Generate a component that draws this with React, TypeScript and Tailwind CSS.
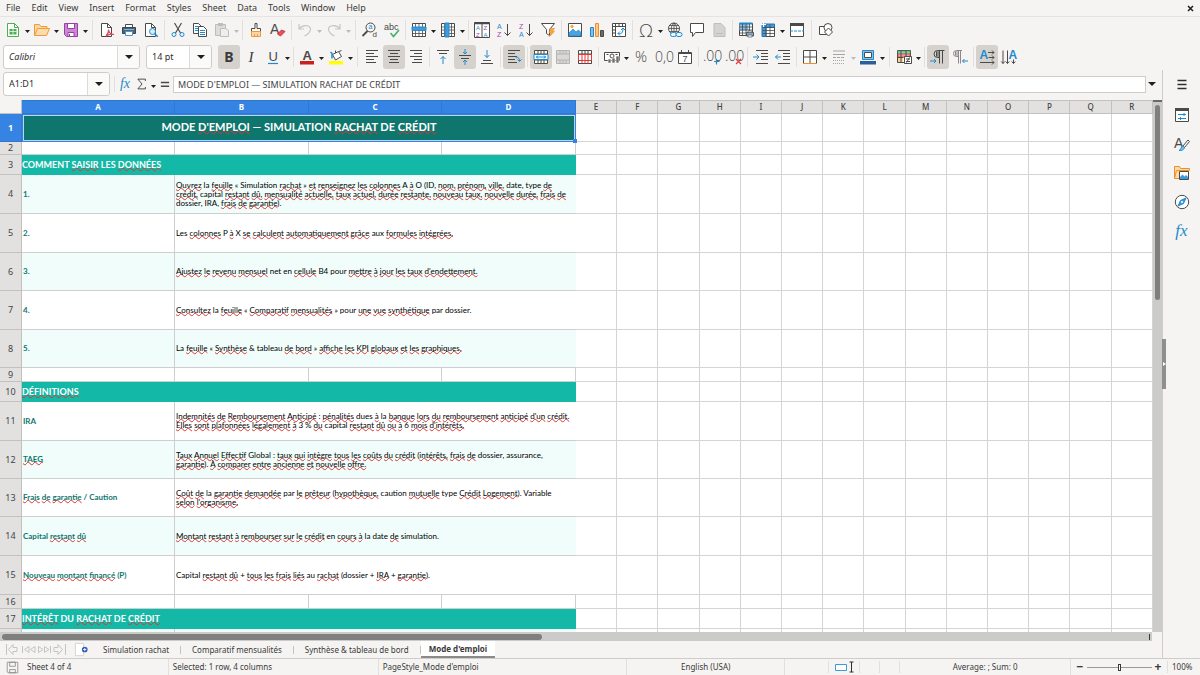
import { useState } from 'react'
import type { ReactNode } from 'react'
import clsx from 'clsx'

const INK = '#4a4a48'
const BLUE = '#1e8bcd'
const SKY = '#83beec'

function Ico({ children, size = 16 }: { children: ReactNode; size?: number }) {
  return (
    <svg
      width={size}
      height={size}
      viewBox="0 0 16 16"
      fill="none"
      stroke={INK}
      strokeWidth="1"
      fontFamily="Liberation Sans, sans-serif"
      aria-hidden="true"
      className="shrink-0 overflow-visible"
    >
      {children}
    </svg>
  )
}

interface GlyphProps {
  x: number
  y: number
  size: number
  color?: string
  weight?: number
  family?: string
  children: string
}

function Glyph({ x, y, size, color = INK, weight, family, children }: GlyphProps) {
  return (
    <text x={x} y={y} fontSize={size} fill={color} stroke="none" fontWeight={weight} fontFamily={family}>
      {children}
    </text>
  )
}

function Lines({ rows, color = INK }: { rows: [number, number, number][]; color?: string }) {
  return <path stroke={color} d={rows.map(([x1, x2, y]) => `M${x1} ${y}H${x2}`).join('')} />
}

const ICONS: Record<string, ReactNode> = {
  new: (
    <Ico>
      <path d="M2.5 1.5h7l4 4v9h-11z" fill="#fff" stroke="#4caf50" />
      <path d="M9.5 1.5v4h4" stroke="#4caf50" />
      <path d="M4.5 7h7v5.500h-7z" fill="#4caf50" stroke="none" />
      <path d="M4.500 9.500h7M8 7v5.500" stroke="#fff" strokeWidth=".7" />
    </Ico>
  ),
  open: (
    <Ico>
      <path d="M.5 13.500V2.500h5l1.500 2h6v3" fill="#fbd9a5" stroke="#ef9b3b" />
      <path d="M.5 13.500l3-7h12l-3 7z" fill="#fcdcae" stroke="#ef9b3b" />
    </Ico>
  ),
  save: (
    <Ico>
      <path d="M1.500 1.500h13v13h-11l-2-2z" fill="#c98bd0" stroke="#9a3fa6" />
      <path d="M4.500 1.500h7v5h-7zM5 10.500h6v4H5z" fill="#fff" stroke="#9a3fa6" />
      <path d="M6.500 12v2.500" stroke="#9a3fa6" />
    </Ico>
  ),
  pdf: (
    <Ico>
      <path d="M2.500 1.500h6l4 4v9h-10z" fill="#fff" />
      <path d="M8.500 1.500v4h4" />
      <path d="M7 14c2-2 3-4 2.500-6.500.5 3 2.500 5 5.500 5-3-1-5.500 0-8 1.500z" stroke="#dc4b5c" strokeWidth="1.200" />
    </Ico>
  ),
  print: (
    <Ico>
      <path d="M4.500 2.500h7v3h-7z" fill="#fff" />
      <path d="M1.500 5.500h13v6h-13z" fill="#56606a" stroke="#3d464f" />
      <path d="M4.500 9.500h7v4h-7z" fill="#fff" stroke="#3f9bd6" />
      <path d="M3 7.500h10" stroke="#75b9e6" />
    </Ico>
  ),
  preview: (
    <Ico>
      <path d="M2.500 1.500h6l4 4v9h-10z" fill="#fff" />
      <path d="M8.500 1.500v4h4" />
      <circle cx="9.500" cy="9.500" r="3" fill="#d6ecfa" stroke={BLUE} />
      <path d="M11.700 11.700l3 3" stroke={BLUE} strokeWidth="1.500" />
    </Ico>
  ),
  cut: (
    <Ico>
      <path d="M4.500 1l6 10M11.500 1l-6 10" strokeWidth="1.200" />
      <circle cx="4" cy="12.500" r="2" stroke={BLUE} />
      <circle cx="12" cy="12.500" r="2" stroke={BLUE} />
    </Ico>
  ),
  copy: (
    <Ico>
      <path d="M1.500 1.500h5l3 3v7h-8z" fill="#fff" />
      <path d="M6.500 4.500h5l3 3v7h-8z" fill="#fff" />
      <Lines rows={[[3, 6, 4.500], [3, 6, 6.500], [3, 6, 8.500], [8, 13, 8.500], [8, 13, 10.500], [8, 13, 12.500]]} color={BLUE} />
    </Ico>
  ),
  paste: (
    <Ico>
      <path d="M1.500 2.500h10v11h-10z" fill="#dcdcda" stroke="#bdbdbb" />
      <path d="M4 1h5v3H4z" fill="#bdbdbb" stroke="none" />
      <path d="M6.500 6.500h5l3 2v6h-8z" fill="#eee" stroke="#bdbdbb" />
    </Ico>
  ),
  clone: (
    <Ico>
      <path d="M7 1.500h2v5h3.500v3h-9v-3H7z" fill="#fff" />
      <path d="M3.500 9.500v5h9v-5z" fill="#fbd9a5" stroke="#ef9b3b" />
      <path d="M6.500 12v2.500M9.500 12v2.500" stroke="#ef9b3b" />
    </Ico>
  ),
  clear: (
    <Ico>
      <Glyph x={0} y={12} size={14}>A</Glyph>
      <path d="M7.500 12l4-4 3.500 1.500-4.500 4.500z" fill="#e8525c" stroke="#c9343f" />
    </Ico>
  ),
  undo: (
    <Ico>
      <path d="M2 2v5h5M2.500 6.500C6 2 13 3 13.500 7c0 3-3 5.500-6 7" stroke="#c6c5c3" strokeWidth="1.200" />
    </Ico>
  ),
  redo: (
    <Ico>
      <path d="M14 2v5H9M13.500 6.500C10 2 3 3 2.500 7c0 3 3 5.500 6 7" stroke="#c6c5c3" strokeWidth="1.200" />
    </Ico>
  ),
  find: (
    <Ico>
      <circle cx="8.500" cy="5.500" r="4.500" />
      <path d="M5.500 9L.5 14" strokeWidth="1.800" />
      <Glyph x={6.500} y={7} size={7} color={BLUE}>a</Glyph>
      <Glyph x={10.500} y={15} size={8}>d</Glyph>
    </Ico>
  ),
  spell: (
    <Ico>
      <Glyph x={0} y={7.500} size={9}>abc</Glyph>
      <path d="M6.500 11l3 3.500 5.500-6.500" stroke="#3fae6b" strokeWidth="1.500" />
    </Ico>
  ),
  row: (
    <Ico>
      <path d="M1.500 1.500h13v13h-13z" fill="#fff" />
      <path d="M1.500 5.500h13M1.500 8.500h13M1.500 11.500h13M4.500 1.500v13M8 1.500v13M11.500 1.500v13" strokeWidth=".8" />
      <path d="M1 5h14v3.500H1z" fill="#3d9be0" stroke="#2f86c8" />
    </Ico>
  ),
  col: (
    <Ico>
      <path d="M1.500 1.500h13v13h-13z" fill="#fff" />
      <path d="M1.500 5h13M1.500 8h13M1.500 11.500h13M4.500 1.500v13M11.500 1.500v13" strokeWidth=".8" />
      <path d="M5 1h4v14H5z" fill="#3d9be0" stroke="#2f86c8" />
    </Ico>
  ),
  sort: (
    <Ico>
      <path d="M.5.5h15v15H.5zM8 .5v15" fill="#fff" />
      <path d="M0 1.500h16" strokeWidth="1.500" />
      <Glyph x={2} y={8} size={6} color={BLUE}>A</Glyph>
      <Glyph x={2} y={15} size={6} color="#a445b2">Z</Glyph>
      <Glyph x={9.500} y={8} size={6} color="#a445b2">Z</Glyph>
      <Glyph x={9.500} y={15} size={6} color={BLUE}>A</Glyph>
    </Ico>
  ),
  asc: (
    <Ico>
      <Glyph x={1} y={6.500} size={7} color={BLUE}>A</Glyph>
      <Glyph x={1} y={15} size={7} color="#a445b2">Z</Glyph>
      <path d="M11.500 2v11.500M8.500 10.500l3 3 3-3" />
    </Ico>
  ),
  desc: (
    <Ico>
      <Glyph x={1} y={6.500} size={7} color="#a445b2">Z</Glyph>
      <Glyph x={1} y={15} size={7} color={BLUE}>A</Glyph>
      <path d="M11.500 2v11.500M8.500 10.500l3 3 3-3" />
    </Ico>
  ),
  filter: (
    <Ico>
      <path d="M1.500 1.500h13l-5 6v6l-3-2v-4z" fill="#fff" />
      <path d="M10.500 6.500h4l-2 3h2l-5 5 1-4H9z" fill="#f7a64a" stroke="#ef8f28" strokeWidth=".6" />
    </Ico>
  ),
  image: (
    <Ico>
      <path d="M1.500 1.500h13v13h-13z" fill="#fff" />
      <path d="M2 14v-3l4-4 3 3 2.500-2L14 10.500V14z" fill="#4ba3df" stroke={BLUE} strokeWidth=".7" />
      <circle cx="5" cy="4.500" r="1.200" fill="#f7a64a" stroke="#f7a64a" />
    </Ico>
  ),
  chart: (
    <Ico>
      <path d="M1.500 5.500h3v9h-3z" fill="#83beec" stroke={BLUE} />
      <path d="M6.500 1.500h3v13h-3z" fill="#fbc98a" stroke="#ef8f28" />
      <path d="M11.500 8.500h3v6h-3z" fill="#6b6b69" />
    </Ico>
  ),
  pivot: (
    <Ico>
      <path d="M1.500 1.500h13v13h-13z" fill="#fff" />
      <path d="M1.500 4.500h13M4.500 1.500v13M8 1.500v3M11.500 1.500v3M1.500 8h3M1.500 11h3" />
      <path d="M7 11.500c3.500 1 5-1 5-5M7 11.500l2-2M7 11.500l2 2M12 6l-2 2M12 6l2 2" stroke={BLUE} />
    </Ico>
  ),
  omega: (
    <Ico>
      <Glyph x={1} y={14.500} size={18} family="Open Sans, sans-serif" weight={300}>Ω</Glyph>
    </Ico>
  ),
  link: (
    <Ico>
      <circle cx="7" cy="6.500" r="5.500" />
      <path d="M1.500 6.500h11M7 1v11M2.500 3.500h9M2.500 9.500h9M7 1C3.500 4 3.500 9 7 12M7 1c3.500 3 3.500 8 0 11" strokeWidth=".8" />
      <rect x="3.500" y="10.500" width="6" height="4" rx="2" stroke={BLUE} fill="#f5f4f2" />
      <rect x="9" y="10.500" width="6" height="4" rx="2" stroke={BLUE} fill="#f5f4f2" />
    </Ico>
  ),
  comment: (
    <Ico>
      <path d="M1.500 1.500h13v9h-8l-3 4v-4h-2z" fill="#fff" />
    </Ico>
  ),
  header: (
    <Ico>
      <path d="M3 1.500h7l4 4v9H3z" fill="#d4d3d1" stroke="#bdbdbb" />
      <path d="M5 11.500h7" stroke="#bdbdbb" />
    </Ico>
  ),
  area: (
    <Ico>
      <path d="M1.500 1.500h13v12h-13z" fill="#fff" />
      <path d="M1.500 1.500h9v7h-9z" fill={SKY} stroke="none" />
      <path d="M1.500 1.500h13" stroke={BLUE} strokeWidth="2" />
      <path d="M1.500 5h13M1.500 8h13M1.500 11h13M4.500 1.500v12M8 1.500v12M11.500 1.500v12" strokeWidth=".8" />
      <path d="M8.500 10.500h7v3.500h-7z" fill="#8fa7b8" stroke="#4a5a68" />
      <path d="M10 9h4v1.500h-4zM10 13h4v2h-4z" fill="#fff" stroke="#4a5a68" strokeWidth=".7" />
    </Ico>
  ),
  freeze: (
    <Ico>
      <path d="M2.500 2.500h12v12h-12z" fill="#fff" />
      <path d="M2 2h12.500v3.500H6v9H2z" fill="#3d9be0" stroke="#2672b4" />
      <path d="M2.500 5.500h12M2.500 8.500h12M2.500 11.500h12M6 2.500v12M10 2.500v12" strokeWidth=".8" />
      <path d="M3.500 0v5M1 2.500h5" stroke="#fff" />
    </Ico>
  ),
  split: (
    <Ico>
      <path d="M1.500 1.500h13v13h-13z" fill="#fff" />
      <path d="M1 1h14v3H1z" fill={INK} stroke="none" />
      <path d="M1 9h14" stroke={BLUE} strokeDasharray="3 1" />
    </Ico>
  ),
  shapes: (
    <Ico>
      <path d="M1.500 4.500h7v8h-7z" fill="#fff" />
      <circle cx="10" cy="5.500" r="4" fill="#fff" />
      <path d="M10.500 6l4 4-4 4-4-4z" fill="#fff" />
    </Ico>
  ),
  bold: <span className="text-[14px] font-bold leading-4">B</span>,
  italic: <span className="font-['Liberation_Serif',serif] text-[15px] italic leading-4">I</span>,
  underline: (
    <Ico>
      <Glyph x={3.500} y={11.500} size={13}>U</Glyph>
      <path d="M3 14.500h10" stroke={BLUE} strokeWidth="1.200" />
    </Ico>
  ),
  color: (
    <Ico>
      <Glyph x={3.500} y={10.500} size={13} weight={700}>A</Glyph>
      <path d="M1 12h14v3.500H1z" fill="#c9211e" stroke="none" />
    </Ico>
  ),
  fill: (
    <Ico>
      <path d="M4.500 5.500l6-3 3 5-6 3.500z" fill="#fff" />
      <path d="M7.500 4V1.500M11 2.500l2.500-1" />
      <path d="M4 9.500V4.500L2.500 3" stroke={BLUE} strokeWidth="1.500" />
      <path d="M1 12h14v3.500H1z" fill="#ff0" stroke="none" />
    </Ico>
  ),
  left: (
    <Ico>
      <Lines rows={[[2, 14, 1.500], [2, 10, 4.500], [2, 14, 7.500], [2, 10, 10.500], [2, 12, 13.500]]} />
    </Ico>
  ),
  center: (
    <Ico>
      <Lines rows={[[2, 14, 1.500], [4, 12, 4.500], [2, 14, 7.500], [4, 12, 10.500], [3, 13, 13.500]]} />
    </Ico>
  ),
  right: (
    <Ico>
      <Lines rows={[[2, 14, 1.500], [6, 14, 4.500], [2, 14, 7.500], [6, 14, 10.500], [4, 14, 13.500]]} />
    </Ico>
  ),
  top: (
    <Ico>
      <Lines rows={[[2, 14, 1.500], [4, 12, 4.500]]} />
      <path d="M8 15V7.500M5.500 10L8 7.500l2.500 2.500" stroke={BLUE} />
    </Ico>
  ),
  middle: (
    <Ico>
      <Lines rows={[[2, 14, 6.500], [4, 12, 9.500]]} />
      <path d="M8 0v5M6 3l2 2 2-2M8 16v-5M6 13l2-2 2 2" stroke={BLUE} />
    </Ico>
  ),
  bottom: (
    <Ico>
      <Lines rows={[[4, 12, 11.500], [2, 14, 14.500]]} />
      <path d="M8 1v7.500M5.500 6L8 8.500 10.500 6" stroke={BLUE} />
    </Ico>
  ),
  wrap: (
    <Ico>
      <Lines rows={[[2, 14, 1.500], [2, 9, 4.500], [2, 11, 7.500], [2, 9, 10.500], [2, 11, 13.500]]} />
      <path d="M9.500 8c3 0 4 1.500 4 4M11.500 10.500l2 2 2-2" stroke={BLUE} />
    </Ico>
  ),
  merge: (
    <Ico>
      <path d="M1.500 1.500h13v13h-13z" fill="#fff" />
      <path d="M1.500 5h13M1.500 11h13M5 1.500v13M11 1.500v13M8 1.500v13" />
      <path d="M1 5.500h14v5H1z" fill="#fff" stroke={BLUE} />
      <path d="M3 8h10M5 6.500L3.500 8 5 9.500M11 6.500L12.500 8 11 9.500" stroke={BLUE} />
    </Ico>
  ),
  mergeOff: (
    <Ico>
      <path d="M1.500 1.500h13v13h-13z" fill="#d9d8d6" stroke="#b5b4b2" />
      <path d="M1.500 5h13M1.500 11h13M5 1.500V5M11 1.500V5M8 1.500V5M5 11v3.500M8 11v3.500M11 11v3.500" stroke="#b5b4b2" />
    </Ico>
  ),
  splitCells: (
    <Ico>
      <path d="M1.500 1.500h13v13h-13z" fill="#fff" />
      <path d="M1.500 5h13M5 1.500V5M11 1.500V5M8 1.500V5M1.500 14.500h13" />
      <path d="M1.500 5.500h13v6h-13zM5 5.500v9M11 5.500v9M8 5.500v9" stroke="#dc3b3b" />
    </Ico>
  ),
  currency: (
    <Ico>
      <path d="M.5 3.500h15v8H.5z" fill="#fff" />
      <circle cx="8" cy="7" r="2" />
      <path d="M2.500 5.500h2M11.500 5.500h2" />
      <path d="M4 10h3v4H4zM8 9h3v5H8zM12 7h3v7h-3z" fill="#6b6b69" stroke="#fff" strokeWidth=".6" />
    </Ico>
  ),
  percent: (
    <Ico>
      <Glyph x={2} y={13} size={15} family="Open Sans, sans-serif" weight={300}>%</Glyph>
    </Ico>
  ),
  number: (
    <Ico>
      <Glyph x={0} y={13} size={14} family="Open Sans, sans-serif" weight={300}>0,0</Glyph>
    </Ico>
  ),
  date: (
    <Ico>
      <path d="M1.500 3.500h13v11h-13zM4.500 1v3M11.500 1v3M1.500 4.500h13" fill="#fff" />
      <Glyph x={5.500} y={13} size={9}>7</Glyph>
    </Ico>
  ),
  decAdd: (
    <Ico>
      <Glyph x={-1} y={12} size={14} family="Open Sans, sans-serif" weight={300}>.00</Glyph>
      <path d="M12.500 10v5.500M10 12.500h5.500" stroke={BLUE} strokeWidth="1.200" />
    </Ico>
  ),
  decDel: (
    <Ico>
      <Glyph x={-1} y={12} size={14} family="Open Sans, sans-serif" weight={300}>.00</Glyph>
      <path d="M10 10l5 5M15 10l-5 5" stroke="#e0383e" strokeWidth="1.200" />
    </Ico>
  ),
  indent: (
    <Ico>
      <Lines rows={[[3, 15, 1.500], [8, 15, 4.500], [8, 15, 7.500], [8, 15, 10.500], [3, 15, 14.500]]} />
      <path d="M0 8h5.500M3.500 5.500L6 8l-2.500 2.500" stroke={BLUE} />
    </Ico>
  ),
  outdent: (
    <Ico>
      <Lines rows={[[3, 15, 1.500], [8, 15, 4.500], [8, 15, 7.500], [8, 15, 10.500], [3, 15, 14.500]]} />
      <path d="M6 8H.5M3 5.500L.5 8 3 10.500" stroke={BLUE} />
    </Ico>
  ),
  borders: (
    <Ico>
      <path d="M1.500 14.500v-13h13v13M8 1.500v13M1.500 8h13" fill="#fff" />
      <path d="M1 14.500h14" stroke="#ef8f28" />
    </Ico>
  ),
  lineStyle: (
    <Ico>
      <path d="M2 2h12M2 5.500h12" stroke="#a5a4a2" />
      <path d="M2 8.500h12" stroke="#a5a4a2" strokeDasharray="3 1" />
      <path d="M2 11.500h12M2 14.500h12" stroke="#a5a4a2" strokeDasharray="1 1" />
    </Ico>
  ),
  lineColor: (
    <Ico>
      <path d="M2.500 1.500h11v9h-11z" fill="#83beec" stroke={BLUE} />
      <path d="M4.500 3.500h7v5h-7z" fill="#fff" stroke={INK} />
      <path d="M0 12h16v3.500H0z" fill="#2a6099" stroke="none" />
    </Ico>
  ),
  cond: (
    <Ico>
      <path d="M1.500 1.500h13v12h-13z" fill="#fff" />
      <path d="M2 2h12v2.500H2z" fill="#7fd09c" stroke="#3fae6b" strokeWidth=".6" />
      <path d="M2 5h12v3H2z" fill="#f59a9a" stroke="#e0383e" strokeWidth=".6" />
      <path d="M2 9h5v4H2z" fill="#fbd28f" stroke="none" />
      <path d="M1.500 8.500h6M5 1.500v12M10 1.500v6" />
      <path d="M8.500 7.500h7v7h-7z" fill="#fff" />
      <path d="M10 10h4M10 12.500h4M13.500 8.500l-3 5" />
    </Ico>
  ),
  ltr: (
    <Ico>
      <path d="M14.500 1.500H7.500a3.500 3.500 0 000 7H9M9.500 1.500v13M12.500 1.500v13M8 2v6M6.500 2.500v5" />
      <path d="M0 12h6M4 10l2 2-2 2" stroke={BLUE} />
    </Ico>
  ),
  rtl: (
    <Ico>
      <path d="M10 1.500H4.500a3 3 0 000 6H6M6.500 1.500v13M8.500 1.500v13M5 2v5M3.500 2.500v4" stroke="#8a8987" />
      <path d="M16 12h-5.500M12.500 10l-2 2 2 2" stroke={BLUE} />
    </Ico>
  ),
  textH: (
    <Ico>
      <Glyph x={0.500} y={9.500} size={12} color={BLUE} weight={700}>A</Glyph>
      <path d="M9 3.500h6M13 1.500l2 2-2 2M9.500 8.500H15M13 6.500l2 2-2 2M1 13.500h14M13 11.500l2 2-2 2" />
    </Ico>
  ),
  textV: (
    <Ico>
      <Glyph x={7.500} y={9.500} size={12} color={BLUE} weight={700}>A</Glyph>
      <path d="M2 1.500v13M.2 12.500l1.800 2 1.800-2M6.500 1.500v13M4.700 12.500l1.800 2 1.800-2M12.500 10.500v4M10.700 12.500l1.800 2 1.800-2" />
    </Ico>
  ),
}

const TOOLBAR_1 =
  'new v open v save v || pdf print preview | cut copy paste x | clone clear | undo x redo x || find spell | row v col v | sort asc desc filter | image chart pivot | omega v link comment header | area freeze v split || shapes'
const TOOLBAR_2 =
  'bold italic underline v | color v fill v || left center right | top middle bottom | wrap | merge mergeOff splitCells | currency v percent number date | decAdd decDel | indent outdent | borders v lineStyle x lineColor v || cond v | ltr rtl | textH textV'
const PRESSED = ['bold', 'center', 'middle', 'wrap', 'merge', 'ltr', 'textH']

function Triangle({ faded = false, wide = false }: { faded?: boolean; wide?: boolean }) {
  return (
    <svg width={wide ? 8 : 5} height={wide ? 4 : 3} viewBox="0 0 8 4" preserveAspectRatio="none" aria-hidden="true">
      <path d="M0 0h8L4 4z" fill={faded ? '#bdbcba' : '#1f1f1f'} />
    </svg>
  )
}

function Tools({ spec }: { spec: string }) {
  return (
    <>
      {spec.split(' ').map((token, i) => {
        if (token === '|' || token === '||') {
          return (
            <span key={i} className={clsx('flex h-5 shrink-0 justify-center', token === '|' ? 'w-[5px]' : 'w-[7px]')}>
              <span className="w-px bg-[#e2e0de]" />
            </span>
          )
        }
        if (token === 'v' || token === 'x') {
          return (
            <button key={i} type="button" aria-label="More options" className="flex h-6 w-[7px] shrink-0 items-center justify-center pt-[3px]">
              <Triangle faded={token === 'x'} />
            </button>
          )
        }
        return (
          <button
            key={i}
            type="button"
            aria-label={token}
            className={clsx(
              'flex h-6 w-[22px] shrink-0 items-center justify-center rounded-[3px]',
              PRESSED.includes(token) && 'bg-[#d5d2ce]',
            )}
          >
            {ICONS[token]}
          </button>
        )
      })}
    </>
  )
}

function Combo({ label, value, className, italic = false }: { label: string; value: string; className: string; italic?: boolean }) {
  return (
    <div className={clsx('flex h-6 shrink-0 overflow-hidden rounded-[3px] border border-[#cfccc9] bg-white', className)}>
      <input
        aria-label={label}
        defaultValue={value}
        className={clsx('w-0 min-w-0 flex-1 px-[5px] text-[9px] text-[#2e2e2e] outline-none', italic && 'italic')}
      />
      <button type="button" aria-label={`${label} list`} className="flex w-[22px] items-center justify-center border-l border-[#dddbd8] bg-[#fafaf9]">
        <Triangle wide />
      </button>
    </div>
  )
}

type Row =
  | { kind: 'title' | 'section'; text: string; height: string }
  | { kind: 'empty'; height: string }
  | { kind: 'text'; label: string; lines: string[]; tint: boolean; height: string }

// Words between underscores get the spell checker's wavy line
const ROWS: Row[] = [
  { kind: 'title', text: "MODE _D'EMPLOI_ — SIMULATION _RACHAT_ DE _CRÉDIT_", height: 'h-7' },
  { kind: 'empty', height: 'h-[13px]' },
  { kind: 'section', text: 'COMMENT _SAISIR_ LES _DONNÉES_', height: 'h-5' },
  {
    kind: 'text', label: '1.', tint: true, height: 'h-[39px]',
    lines: [
      '_Ouvrez_ la _feuille_ « Simulation _rachat_ » _et_ _renseignez_ _les_ _colonnes_ A _à_ O (ID, _nom,_ _prénom,_ _ville,_ date, type _de_',
      '_crédit,_ capital _restant_ _dû,_ _mensualité_ _actuelle,_ _taux_ _actuel,_ _durée_ _restante,_ _nouveau_ _taux,_ _nouvelle_ _durée,_ _frais_ _de_',
      'dossier, IRA, _frais_ _de_ _garantie_).',
    ],
  },
  {
    kind: 'text', label: '2.', tint: false, height: 'h-[39px]',
    lines: ['Les _colonnes_ P _à_ X _se_ _calculent_ _automatiquement_ _grâce_ aux _formules_ _intégrées._'],
  },
  {
    kind: 'text', label: '3.', tint: true, height: 'h-[38px]',
    lines: ["_Ajustez_ _le_ _revenu_ _mensuel_ net en _cellule_ B4 pour _mettre_ _à_ _jour_ _les_ _taux_ _d'endettement._"],
  },
  {
    kind: 'text', label: '4.', tint: false, height: 'h-[39px]',
    lines: ['_Consultez_ la _feuille_ « _Comparatif_ _mensualités_ » pour _une_ _vue_ _synthétique_ par dossier.'],
  },
  {
    kind: 'text', label: '5.', tint: true, height: 'h-[38px]',
    lines: ['La _feuille_ « _Synthèse_ & tableau _de_ _bord_ » _affiche_ _les_ _KPI_ _globaux_ _et_ _les_ _graphiques._'],
  },
  { kind: 'empty', height: 'h-[14px]' },
  { kind: 'section', text: '_DÉFINITIONS_', height: 'h-5' },
  {
    kind: 'text', label: 'IRA', tint: false, height: 'h-[39px]',
    lines: [
      "_Indemnités_ _de_ _Remboursement_ _Anticipé_ : _pénalités_ dues _à_ la _banque_ _lors_ _du_ _remboursement_ _anticipé_ _d'un_ _crédit._",
      "_Elles_ _sont_ _plafonnées_ _légalement_ _à_ 3 % _du_ capital _restant_ _dû_ _ou_ _à_ 6 _mois_ _d'intérêts._",
    ],
  },
  {
    kind: 'text', label: '_TAEG_', tint: true, height: 'h-[38px]',
    lines: [
      '_Taux_ _Annuel_ _Effectif_ Global : _taux_ _qui_ _intègre_ _tous_ _les_ _coûts_ _du_ _crédit_ (_intérêts,_ _frais_ _de_ dossier, assurance,',
      '_garantie_). _À_ _comparer_ _entre_ _ancienne_ _et_ _nouvelle_ _offre._',
    ],
  },
  {
    kind: 'text', label: '_Frais_ _de_ _garantie_ / Caution', tint: false, height: 'h-[38px]',
    lines: [
      '_Coût_ _de_ la _garantie_ _demandée_ par _le_ _prêteur_ (_hypothèque,_ caution _mutuelle_ type _Crédit_ _Logement_). Variable',
      "_selon_ _l'organisme._",
    ],
  },
  {
    kind: 'text', label: 'Capital _restant_ _dû_', tint: true, height: 'h-[39px]',
    lines: ['_Montant_ _restant_ _à_ _rembourser_ _sur_ _le_ _crédit_ en _cours_ _à_ la date _de_ simulation.'],
  },
  {
    kind: 'text', label: '_Nouveau_ _montant_ _financé_ (P)', tint: false, height: 'h-[39px]',
    lines: ['Capital _restant_ _dû_ + _tous_ _les_ _frais_ _liés_ au _rachat_ (dossier + _IRA_ + _garantie_).'],
  },
  { kind: 'empty', height: 'h-[14px]' },
  { kind: 'section', text: '_INTÉRÊT_ DU _RACHAT_ DE _CRÉDIT_', height: 'h-5' },
  // only the top edge of this row shows above the scrollbar
  { kind: 'text', label: '', lines: [], tint: true, height: 'h-5' },
]

const COLUMNS = 'ABCDEFGHIJKLMNOPQR'.split('')
const EXTRA = COLUMNS.slice(4)

function Checked({ text }: { text: string }) {
  return (
    <>
      {text.split('_').map((part, i) =>
        i % 2 ? (
          <span key={i} className="underline decoration-[#dc3531] decoration-wavy decoration-1 underline-offset-[-1px] [text-decoration-skip-ink:none]">
            {part}
          </span>
        ) : (
          part
        ),
      )}
    </>
  )
}

function Cells({ row }: { row: Row }) {
  if (row.kind === 'title') {
    return (
      <td
        colSpan={4}
        className="relative bg-[#0f766e] px-0 pb-[2px] pt-0 text-center text-[11px] font-bold leading-4 text-white shadow-[inset_0_0_0_1px_#3584e4,inset_0_0_0_2px_#b9d5f5]"
      >
        <Checked text={row.text} />
        <span className="absolute -bottom-px -right-px size-1 bg-[#3584e4]" />
      </td>
    )
  }
  if (row.kind === 'section') {
    return (
      <td colSpan={4} className="bg-[#14b8a6] p-0 text-[9px] font-bold leading-3 text-white">
        <Checked text={row.text} />
      </td>
    )
  }
  if (row.kind === 'empty') {
    return COLUMNS.slice(0, 4).map(c => <td key={c} className="border-b border-r border-[#cfcfcf]" />)
  }
  const bg = row.tint ? 'bg-[#f0fdfa]' : 'bg-white'
  return (
    <>
      <td className={clsx('border-b border-r border-[#cfcfcf] px-px py-0 text-[8px] font-bold leading-[9px] text-[#0f766e]', bg)}>
        <Checked text={row.label} />
      </td>
      <td colSpan={3} className={clsx('border-b border-[#cfcfcf] px-px py-0 text-[8px] leading-[9px] text-black', bg)}>
        {row.lines.map(line => (
          <div key={line} className="whitespace-nowrap">
            <Checked text={line} />
          </div>
        ))}
      </td>
    </>
  )
}

function Sheet() {
  return (
    <table className="w-full table-fixed border-separate border-spacing-0 bg-white">
      <colgroup>
        <col className="w-[22px]" />
        <col className="w-[153px]" />
        <col className="w-[134px]" />
        <col className="w-[133px]" />
        <col className="w-[134px]" />
        {EXTRA.map(c => (
          <col key={c} />
        ))}
      </colgroup>
      <thead>
        <tr>
          <th aria-label="Select all" className="h-[14px] border-b border-r border-[#c2c1bf] bg-[#f5f4f2]" />
          {COLUMNS.map((c, i) => (
            <th
              key={c}
              scope="col"
              className={clsx(
                "h-[14px] border-b border-r border-t font-['Noto_Sans',sans-serif] text-[8px] leading-3",
                i < 4 ? 'border-[#2f78d0] bg-[#3584e4] font-bold text-white' : 'border-[#c2c1bf] bg-[#e2e1df] font-medium text-[#444]',
              )}
            >
              {c}
            </th>
          ))}
        </tr>
      </thead>
      <tbody className="font-['Lato',sans-serif]">
        {ROWS.map((row, i) => (
          <tr key={i} className={row.height}>
            <th
              scope="row"
              className={clsx(
                "border-b border-r p-0 text-center font-['Noto_Sans',sans-serif] text-[9px] leading-3",
                i === 0 ? 'border-[#2f78d0] bg-[#3584e4] font-bold text-white' : 'border-[#c2c1bf] bg-[#e2e1df] font-normal text-[#444]',
              )}
            >
              {i < ROWS.length - 1 && i + 1}
            </th>
            <Cells row={row} />
            {EXTRA.map(c => (
              <td key={c} className="border-b border-r border-[#d4d4d4]" />
            ))}
          </tr>
        ))}
      </tbody>
    </table>
  )
}

function FormulaBar() {
  return (
    <div className="mb-[2px] flex h-7 shrink-0 items-center pl-[3px] pr-1">
      <Combo label="Name Box" value="A1:D1" className="w-[107px]" />
      <span className="ml-1 h-4 w-px bg-[#e2e0de]" />
      <button type="button" className="ml-1 w-3 font-['Liberation_Serif',serif] text-[14px] italic leading-4 text-[#1e8bcd]">fx</button>
      <button type="button" aria-label="Sum" className="ml-1 flex w-[14px] justify-center">
        <Ico size={12}>
          <path d="M12.500 4V1.500h-10L8 8l-5.500 6.500h10V12" strokeWidth="1.300" />
        </Ico>
      </button>
      <span className="flex w-2 justify-center pt-1">
        <Triangle />
      </span>
      <button type="button" aria-label="Formula" className="flex w-4 justify-center">
        <Ico size={12}>
          <path d="M2.500 6h11M2.500 11h11" strokeWidth="2" />
        </Ico>
      </button>
      <input
        aria-label="Input line"
        defaultValue="MODE D'EMPLOI — SIMULATION RACHAT DE CRÉDIT"
        className="h-[17px] min-w-0 flex-1 border border-[#cfccc9] bg-white px-1 text-[9px] text-[#444] outline-none"
      />
      <button type="button" aria-label="Expand formula bar" className="flex w-3 justify-center">
        <Triangle wide />
      </button>
    </div>
  )
}

function Sidebar() {
  return (
    <aside className="relative flex w-[38px] shrink-0 flex-col items-center gap-[13px] border-l border-[#cfccc9] pt-[6px]">
      <button type="button" aria-label="Sidebar settings" className="mb-[2px]">
        <Ico><path d="M3.500 4.500h9M3.500 8.500h9M3.500 12.500h9" stroke="#2e2e2e" strokeWidth="1.500" /></Ico>
      </button>
      <button type="button" aria-label="Properties">
        <Ico>
          <path d="M1.500 1.500h13v13h-13z" fill="#fff" />
          <path d="M1 1h14v3H1z" fill={INK} stroke="none" />
          <path d="M4 7.500h8M4 11.500h8M10 6v3M6.500 10v3" stroke={BLUE} />
        </Ico>
      </button>
      <button type="button" aria-label="Styles">
        <Ico>
          <Glyph x={0} y={11.500} size={14}>A</Glyph>
          <path d="M9 10l5-6 1.500 1.500-5 6z" fill="#fff" />
          <path d="M5 14.500c2 0 1.500-4 4-4.500 3 1 1 5-4 4.500z" fill={SKY} stroke={BLUE} />
        </Ico>
      </button>
      <button type="button" aria-label="Gallery">
        <Ico>
          <path d="M.5 13.500v-12h5l1 2h9v2" fill="#fbd9a5" stroke="#ef8f28" />
          <path d="M.5 13.500l2-8h12v8z" fill="#fcdcae" stroke="#ef8f28" />
          <path d="M5.500 6.500h9v8h-9z" fill="#fff" />
          <path d="M6 14v-2l2.500-2.500 2 2L12 10l2 2v2z" fill="#3d9be0" stroke="none" />
        </Ico>
      </button>
      <button type="button" aria-label="Navigator">
        <Ico>
          <circle cx="8" cy="8" r="6.700" fill="#fff" />
          <path d="M12 4L9.500 9.500 4 12l2.500-5.500z" fill="#3d9be0" stroke={BLUE} />
          <circle cx="8" cy="8" r="1" fill="#fff" stroke="none" />
        </Ico>
      </button>
      <button type="button" aria-label="Functions" className="h-4 font-['Liberation_Serif',serif] text-[17px] italic leading-4 text-[#1e8bcd]">fx</button>
      <button
        type="button"
        aria-label="Hide sidebar"
        className="absolute -left-px top-[269px] flex h-[50px] w-1 items-center justify-center bg-[#8f8f8d]"
      >
        <svg width="3" height="4" viewBox="0 0 3 4" aria-hidden="true">
          <path d="M0 0l3 2-3 2z" fill="#fff" />
        </svg>
      </button>
    </aside>
  )
}

const TABS = ['Simulation rachat', 'Comparatif mensualités', 'Synthèse & tableau de bord', "Mode d'emploi"]

function SheetTabs() {
  const [active, setActive] = useState(3)
  return (
    <nav className="flex h-[17px] shrink-0 items-stretch pl-[5px]">
      <svg width="62" height="17" viewBox="0 0 62 17" fill="none" stroke="#c4c3c1" aria-hidden="true">
        <path d="M1.500 3v11M12 6.500H8V3.500L3.500 8.500 8 13.500v-3h4zM17.500 5v7M24 5.500L19.500 8.500l4.500 3zM30 5.500L25.500 8.500l4.500 3zM33.500 5.500L38 8.500l-4.500 3zM39.500 5.500L44 8.500l-4.500 3zM45.500 5v7M49 6.500h4V3.500l4.500 5-4.500 5v-3h-4zM60.500 3v11" />
      </svg>
      <button type="button" aria-label="Add sheet" className="ml-2 mr-1 flex items-center">
        <Ico size={13}>
          <path d="M.5.5h10v15H.5z" fill="#fff" stroke="#d0cfcd" />
          <circle cx="12" cy="8" r="3.500" fill="#2f5fb3" stroke="none" />
          <path d="M12 6v4M10 8h4" stroke="#fff" />
        </Ico>
      </button>
      {TABS.map((tab, i) => (
        <div key={tab} className="flex items-center">
          <button
            type="button"
            onClick={() => setActive(i)}
            className={clsx(
              'h-full text-[8px] leading-3',
              i === active ? 'border-b-2 border-[#8a8a88] bg-white px-2 font-bold' : 'px-[11px]',
            )}
          >
            {tab}
          </button>
          {i < 3 && <span className="h-2 w-px bg-[#c4c3c1]" />}
        </div>
      ))}
    </nav>
  )
}

function StatusBar() {
  return (
    <footer className="flex h-[17px] shrink-0 items-center divide-x divide-[#e2e0de] border-t border-[#cfccc9] text-[8px] leading-4">
      <div className="flex flex-[162] items-center gap-2 pl-[6px]">
        <Ico size={13}>
          <path d="M1.500 1.500h13v13h-12l-1-1zM4.500 1.500h7v5h-7zM4.500 10.500h7v4h-7z" stroke="#8a8987" />
        </Ico>
        Sheet 4 of 4
      </div>
      <div className="flex-[205] pl-1">Selected: 1 row, 4 columns</div>
      <div className="flex-[244] pl-1">PageStyle_Mode d'emploi</div>
      <div className="flex-[157] text-center">English (USA)</div>
      <div className="h-3 flex-[43]" />
      <div className="flex w-[31px] items-center pl-[6px]">
        <svg width="20" height="12" viewBox="0 0 20 12" fill="none" aria-hidden="true">
          <path d="M.5 3.500h11v6H.5z" fill="#fff" stroke="#3f9bd6" />
          <path d="M14.500 1h4M14.500 11h4M16.500 1v10" stroke="#2e2e2e" />
        </svg>
      </div>
      <div className="h-3 w-5" />
      <div className="h-3 w-5" />
      <div className="flex-[170] text-center">Average: ; Sum: 0</div>
      <div className="flex w-[97px] items-center justify-center gap-[3px]">
        <button type="button" className="w-[7px] text-[12px] font-bold leading-3">−</button>
        <input
          type="range"
          aria-label="Zoom"
          defaultValue={50}
          className="h-2 w-[65px] appearance-none bg-[linear-gradient(#9b9a98,#9b9a98)] bg-[length:100%_1px] bg-center bg-no-repeat [&::-webkit-slider-thumb]:h-[7px] [&::-webkit-slider-thumb]:w-[3px] [&::-webkit-slider-thumb]:appearance-none [&::-webkit-slider-thumb]:border [&::-webkit-slider-thumb]:border-[#3a3a3a] [&::-webkit-slider-thumb]:bg-white"
        />
        <button type="button" className="w-[7px] text-[12px] font-bold leading-3">+</button>
      </div>
      <div className="w-8 pl-1">100%</div>
    </footer>
  )
}

const MENUS = ['File', 'Edit', 'View', 'Insert', 'Format', 'Styles', 'Sheet', 'Data', 'Tools', 'Window', 'Help']

export default function App() {
  return (
    <div className="flex h-screen flex-col overflow-hidden bg-[#f5f4f2] font-['Noto_Sans',sans-serif] text-[#3a3a3a]">
      <header className="flex h-[17px] shrink-0 items-center gap-[11px] border-b border-[#e6e4e2] px-[6px] text-[9px]">
        {MENUS.map(m => (
          <button key={m} type="button">{m}</button>
        ))}
        <button type="button" aria-label="Close" className="ml-auto">
          <svg width="7" height="7" viewBox="0 0 7 7" stroke="#1f1f1f" strokeWidth="1.500" aria-hidden="true">
            <path d="M1 1l5 5M6 1L1 6" />
          </svg>
        </button>
      </header>

      <div role="toolbar" aria-label="Standard" className="flex h-[26px] shrink-0 items-center pl-[2px]">
        <Tools spec={TOOLBAR_1} />
      </div>
      <div role="toolbar" aria-label="Formatting" className="flex h-[27px] shrink-0 items-center pl-[3px]">
        <Combo label="Font Name" value="Calibri" italic className="w-[137px]" />
        <Combo label="Font Size" value="14 pt" className="mx-[6px] w-[66px]" />
        <Tools spec={TOOLBAR_2} />
      </div>

      <div className="flex min-h-0 flex-1">
        <main className="flex min-w-0 flex-1 flex-col">
          <FormulaBar />
          <div className="flex min-h-0 flex-1">
            <div className="min-w-0 flex-1 overflow-hidden">
              <Sheet />
            </div>
            <div className="w-[9px] border-t-2 border-[#6b6b69] bg-[#cbcbca] px-[2px] pt-[3px]">
              <div className="h-[37%] rounded-full bg-[#7f7f7e]" />
            </div>
          </div>
          <div className="mr-[10px] flex h-[9px] shrink-0 items-center bg-[#cbcbca] px-[2px]">
            <div className="h-[6px] w-[47%] rounded-full bg-[#7f7f7e]" />
            <span className="ml-auto h-[6px] w-px bg-[#3a3a3a]" />
          </div>
          <SheetTabs />
        </main>
        <Sidebar />
      </div>
      <StatusBar />
    </div>
  )
}
